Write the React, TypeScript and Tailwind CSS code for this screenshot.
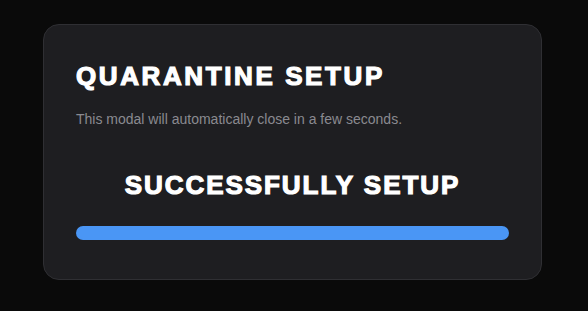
export default function App() {
  return (
    <div className="min-h-screen w-full bg-[#0a0a0a] flex items-start justify-center pt-6 pr-[3px] font-['Liberation_Sans',Arial,sans-serif]">
      <div className="w-[499px] h-[256px] rounded-2xl border border-[#2f2f33] bg-[#1e1e21] p-8">
        <h2 className="text-[26px] leading-[32px] font-bold tracking-[0.1em] text-white mt-[3px] [-webkit-text-stroke:1.2px_white]">
          QUARANTINE SETUP
        </h2>
        <p className="mt-[17px] text-[14px] leading-[20px] text-[#8a8a90]">
          This modal will automatically close in a few seconds.
        </p>
        <div className="mt-[40px] text-center text-[26px] leading-[32px] font-bold tracking-[0.075em] text-white [-webkit-text-stroke:1.2px_white]">
          SUCCESSFULLY SETUP
        </div>
        <div className="mt-[25px] h-[14px] w-full rounded-full bg-[#4a96f5]" />
      </div>
    </div>
  );
}
